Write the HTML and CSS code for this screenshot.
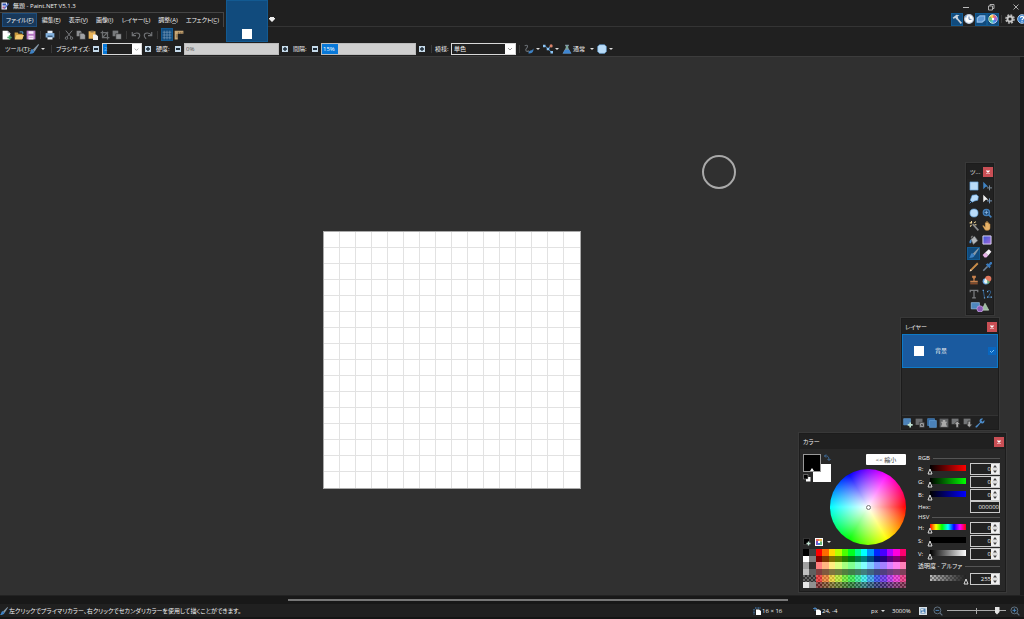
FILE: index.html
```html
<!DOCTYPE html>
<html lang="ja">
<head>
<meta charset="utf-8">
<title>無題 - Paint.NET V5.1.3</title>
<link rel="stylesheet" href="styles.css">
</head>
<body>
<svg class="sprite" aria-hidden="true">
  <defs>
    <linearGradient id="gViolet" x1="0" y1="0" x2="1" y2="1"><stop offset="0" stop-color="#3558d8"/><stop offset="1" stop-color="#a868d8"/></linearGradient>
    <symbol id="app" viewBox="0 0 16 16"><path fill="#e8ecf8" d="M1 1h11v14H1z"/><path fill="#3156b8" d="M3 3h7v4H3z"/><path fill="#b35a8b" d="M3 9h5v4H3z"/><path fill="#5c78cf" d="M14 2l2 2-7 9-3 1 1-3z"/></symbol>
    <symbol id="new" viewBox="0 0 16 16"><path fill="#fff" d="M1 1h8l4 4v10H1z"/><path fill="#aab" d="M9 1v4h4z"/><path stroke="#49a868" stroke-width="2.4" d="M12 8.500v7M8.500 12h7"/></symbol>
    <symbol id="open" viewBox="0 0 16 16"><path fill="#c99a3e" d="M1 4h5l1 2h7v8H1z"/><path fill="#f3c970" d="M4 8h12l-3 7H1z"/><path fill="none" stroke="#5aa0dc" stroke-width="1.600" d="M9 3h5v3"/></symbol>
    <symbol id="save" viewBox="0 0 16 16"><path fill="#b678c4" d="M1 1h14v14H1z"/><path fill="#f7eefa" d="M4 2h8v4H4zM4 9h8v6H4z"/><path fill="#b678c4" d="M5 11h6v1H5z"/></symbol>
    <symbol id="print" viewBox="0 0 16 16"><path fill="#e6edf5" d="M4 1h8v5H4zM4 11h8v4H4z"/><path fill="#83b2df" d="M1 5h14v7H1z"/><path fill="#35506c" d="M4 9h8v2H4z"/></symbol>
    <symbol id="cut" viewBox="0 0 16 16"><g fill="none" stroke="#77797c" stroke-width="1.600"><path d="M3 1l8 10M13 1L5 11"/><circle cx="4" cy="13" r="2"/><circle cx="12" cy="13" r="2"/></g></symbol>
    <symbol id="copy" viewBox="0 0 16 16"><path fill="#8b8d90" d="M1 1h6l2 2v7H1z"/><path fill="#a0a2a5" stroke="#212121" d="M6 5h6l3 3v7H6z"/></symbol>
    <symbol id="paste" viewBox="0 0 16 16"><path fill="#e9b45b" d="M1 2h11v12H1z"/><path fill="#8b734d" d="M4 1h5v3H4z"/><path fill="#f2f2f2" d="M8 7h5l3 3v6H8z"/></symbol>
    <symbol id="crop" viewBox="0 0 16 16"><path fill="none" stroke="#6c6e70" stroke-width="2" d="M4 1v11h11M1 4h11v11M5 11l8-8"/></symbol>
    <symbol id="desel" viewBox="0 0 16 16"><path fill="#77797b" d="M1 1h9v9H1z"/><path fill="#929496" stroke="#212121" d="M6 6h9v9H6z"/></symbol>
    <symbol id="undo" viewBox="0 0 16 16"><path fill="none" stroke="#717376" stroke-width="1.800" d="M2 3v6h6M2 9c4-6 12-5 12 0 0 2-1 3-3 5"/></symbol>
    <symbol id="redo" viewBox="0 0 16 16"><path fill="none" stroke="#717376" stroke-width="1.800" d="M14 3v6H8M14 9c-4-6-12-5-12 0 0 2 1 3 3 5"/></symbol>
    <symbol id="grid" viewBox="0 0 16 16"><path stroke="#7e9fbe" d="M3.500 1v14M8 1v14M12.500 1v14M1 3.500h14M1 8h14M1 12.500h14"/></symbol>
    <symbol id="ruler" viewBox="0 0 16 16"><path fill="#c9a876" d="M1 1h14v5H6v9H1z"/><path stroke="#5b4426" d="M7 3v3M10 3v3M13 3v3M3 8h3M3 11h3"/></symbol>
    <symbol id="brush" viewBox="0 0 16 16"><path fill="#8698a8" d="M15 0l1 1-7 11-3-3z"/><path fill="#3f82c4" d="M5 8l4 4c-1 3-5 4-9 4 3-2 2-7 5-8z"/></symbol>
    <symbol id="squig" viewBox="0 0 16 16"><path fill="none" stroke="#686d72" stroke-width="1.800" d="M1 3c5-3 6 1 3 4s0 6 4 4"/><path fill="#3f82c4" d="M7 15c1-5 4-5 6-5l2-3c1 6-3 8-8 8z"/></symbol>
    <symbol id="spline" viewBox="0 0 16 16"><path fill="none" stroke="#4b90d0" stroke-width="1.600" d="M2 3c4 0 4 5 7 6s2 4 5 4M8 9l4-6"/><path fill="#8cc4f3" d="M0 1h4v4H0zM6 6h4v4H6zM12 11h4v4h-4z"/><circle cx="13" cy="3" r="2.500" fill="#d98269"/></symbol>
    <symbol id="flask" viewBox="0 0 16 16"><path fill="#8299a6" d="M5 1h6v2h-1v3l5 9H1l5-9V3H5z"/><path fill="#3f86d2" d="M5 9h6l4 6H1z"/><path fill="#6fac8c" d="M7 3h2v5H7z"/></symbol>
    <symbol id="clipr" viewBox="0 0 16 16"><path fill="#b9dcf8" stroke="#538fc4" d="M4 1h8l3 3v8l-3 3H4l-3-3V4z"/></symbol>
    <symbol id="hammer" viewBox="0 0 16 16"><path stroke="#c7ced6" stroke-width="2.600" d="M7 6l8 9"/><path fill="#c7d3de" d="M1 6l6-5 5 1-3 2 1 3-2 2-3-3-2 2z"/></symbol>
    <symbol id="clock" viewBox="0 0 16 16"><circle cx="8" cy="8" r="7" fill="#fff" stroke="#bac8dc" stroke-width="2"/><path fill="none" stroke="#4a6ea0" stroke-width="1.400" d="M8 4v4.500h4"/><path fill="#7aa5d6" d="M0 4l4-3v5z"/></symbol>
    <symbol id="layersI" viewBox="0 0 16 16"><path fill="#8dbae8" d="M6 2h9v8l-5 4H1V6z"/><path fill="#5d97d4" d="M6 4h7v5l-4 3H3V7z"/></symbol>
    <symbol id="wheelI" viewBox="0 0 16 16"><path fill="#ee6f74" d="M8 8V1a7 7 0 0 1 6 4z"/><path fill="#b064df" d="M8 8l6-4v8z"/><path fill="#4b91ec" d="M8 8l6 4a7 7 0 0 1-6 3z"/><path fill="#55c5c0" d="M8 8v7a7 7 0 0 1-6-3z"/><path fill="#73ce6e" d="M8 8l-6 4V4z"/><path fill="#f3cf52" d="M8 8L2 4a7 7 0 0 1 6-3z"/><circle cx="8" cy="8" r="7" fill="none" stroke="#fff"/><circle cx="8" cy="8" r="2" fill="#fff"/></symbol>
    <symbol id="gear" viewBox="0 0 16 16"><circle cx="8" cy="8" r="6.500" fill="none" stroke="#b7b7b7" stroke-width="2.500" stroke-dasharray="3 2.100"/><circle cx="8" cy="8" r="4" fill="none" stroke="#c6c6c6" stroke-width="3"/></symbol>
    <symbol id="help" viewBox="0 0 16 16"><circle cx="8" cy="8" r="7" fill="#3a80cd" stroke="#b3cfed" stroke-width="1.500"/><path fill="none" stroke="#fff" stroke-width="1.800" d="M5.500 6c0-3 5-3 5 0 0 2-2.500 2-2.500 4M8 11.500v1.500"/></symbol>
    <symbol id="rectsel" viewBox="0 0 16 16"><path fill="#b9dcfa" stroke="#5e9fd8" d="M1.500 1.500h13v13h-13z"/></symbol>
    <symbol id="movepx" viewBox="0 0 16 16"><path fill="#3f83c4" d="M2 1l8 8H6l-4 4z"/><path stroke="#7d8c99" stroke-width="1.600" d="M12 7v8M8 11h8"/></symbol>
    <symbol id="movesel" viewBox="0 0 16 16"><path fill="#f2f2f2" d="M2 1l8 8H6l-4 4z"/><path stroke="#7799bb" stroke-width="1.600" d="M12 7v8M8 11h8"/></symbol>
    <symbol id="lasso" viewBox="0 0 16 16"><path fill="#b9dcfa" stroke="#5e9fd8" d="M5 2l7-1 3 3-1 6-5 1-4 2-3-3z"/><path fill="none" stroke="#4b8bc8" stroke-width="1.600" d="M5 11l-4 4"/></symbol>
    <symbol id="ellsel" viewBox="0 0 16 16"><circle cx="8" cy="8" r="6.500" fill="#b9dcfa" stroke="#5e9fd8"/></symbol>
    <symbol id="zoomT" viewBox="0 0 16 16"><circle cx="7" cy="7" r="5" fill="#204a77" stroke="#4380bb" stroke-width="2"/><path stroke="#4380bb" stroke-width="2.600" d="M10.500 10.500L15 15"/><path stroke="#8dbbe6" stroke-width="1.300" d="M7 4v6M4 7h6"/></symbol>
    <symbol id="wand" viewBox="0 0 16 16"><path stroke="#8a8c8e" stroke-width="2.600" d="M6 5l9 10"/><path stroke="#f1d799" stroke-width="1.700" d="M1 3h4M4 0v2M4 6l-2 3M8 3l3-2M9 6h3"/></symbol>
    <symbol id="hand" viewBox="0 0 16 16"><path fill="#e7b268" stroke="#89602c" stroke-width=".6" d="M5 8V3c0-1 2-1 2 0V1c0-1 2-1 2 0v2c0-1 2-1 2 0v2c0-1 2-1 2 0v6c0 5-8 5-9 2L1 8c0-2 2-1 4 2z"/></symbol>
    <symbol id="bucket" viewBox="0 0 16 16"><path fill="#b5b8bb" stroke="#606468" d="M3 7l6-5 5 7-7 6z"/><path fill="none" stroke="#999" stroke-width="1.300" d="M8 6C6 0 3 1 4 5"/><path fill="#478bd0" d="M3 7c-2 1-3 4-2 6 2 1 3-1 3-4z"/></symbol>
    <symbol id="gradT" viewBox="0 0 16 16"><path fill="url(#gViolet)" stroke="#ddd8f2" stroke-width="1.500" d="M1.500 1.500h13v13h-13z"/></symbol>
    <symbol id="eraser" viewBox="0 0 16 16"><path fill="#e9b3e8" d="M1 11l4-4 5 5-3 3H4z"/><path fill="#f7f1f8" d="M5 7l6-5 4 4-5 6z"/></symbol>
    <symbol id="pencil" viewBox="0 0 16 16"><path stroke="#d99a51" stroke-width="3" d="M3.500 12.500L14 2"/><path fill="#f1d6b2" d="M1 15l1-4 3 3z"/><path stroke="#7c5029" stroke-width=".8" d="M3 12L14 1"/></symbol>
    <symbol id="picker" viewBox="0 0 16 16"><path stroke="#708398" stroke-width="2.400" d="M2 14l7-7"/><path fill="#3a7abd" d="M6 4l3-2 2 1 2-3c3-1 4 2 3 3l-3 2 1 2-2 3z"/></symbol>
    <symbol id="stamp" viewBox="0 0 16 16"><path fill="#c7814d" d="M5 1h6v3l-2 2v3h5v3H2V9h5V6L5 4z"/><path fill="#90512d" d="M2 13h12v2H2z"/></symbol>
    <symbol id="recolor" viewBox="0 0 16 16"><circle cx="6" cy="10" r="5" fill="#66a8e7"/><circle cx="10" cy="6" r="5" fill="#de765c"/><path fill="#e9f5ef" d="M5 5l6 6-5 3-3-3z"/><path fill="#69ad7c" d="M8 8l5 3-4 4z"/></symbol>
    <symbol id="textT" viewBox="0 0 16 16"><path fill="none" stroke="#7b7d80" stroke-width="2" d="M2 5V2h12v3M8 2v12M5 14.200h6"/></symbol>
    <symbol id="line" viewBox="0 0 16 16"><path fill="none" stroke="#356da4" stroke-width="1.300" d="M2 2l2 12M9 3c8-2 5 4 0 10h6"/><path fill="#6aa8df" d="M1 1h2v2H1zM3 13h2v2H3zM8 3h2v2H8zM8 12h2v2H8zM14 12h2v2h-2z"/></symbol>
    <symbol id="shapes" viewBox="0 0 32 16"><path fill="#4e87be" stroke="#a1c8ee" d="M2 1h13v10H2z"/><path fill="#9abb9e" stroke="#c8dbc6" d="M24 2l6 11H19z"/><circle cx="16" cy="11" r="5" fill="#8b5ab4" stroke="#d0b2ec"/></symbol>
    <symbol id="laddd" viewBox="0 0 16 16"><path fill="#4c82b8" stroke="#609ad1" d="M1 1h11v10H1z"/><path stroke="#bfe1d0" stroke-width="2.600" d="M11.500 7v8M7.500 11h8"/></symbol>
    <symbol id="ldel" viewBox="0 0 16 16"><path fill="#6b6d6f" d="M1 1h11v10H1z"/><path fill="#a0a2a4" stroke="#262626" d="M7 7h8v8H7z"/><path stroke="#444" stroke-width="1.400" d="M9 9l4 4M13 9l-4 4"/></symbol>
    <symbol id="ldup" viewBox="0 0 16 16"><path fill="#3369a1" stroke="#4c8bc8" d="M1 1h11v11H1z"/><path fill="#4b82b9" stroke="#65a0d7" d="M4 4h11v11H4z"/></symbol>
    <symbol id="lmerge" viewBox="0 0 16 16"><path fill="#606264" d="M1 1h14v14H1z"/><path fill="#aaa" d="M6 3h4v3h3l-2 3 2 5H3l2-5-2-3h3z"/></symbol>
    <symbol id="lup" viewBox="0 0 16 16"><path fill="#737577" d="M1 1h11v9H1z"/><path fill="#aaa" stroke="#262626" d="M10 5l5 5h-3v5H8v-5H5z"/></symbol>
    <symbol id="ldown" viewBox="0 0 16 16"><path fill="#737577" d="M1 1h11v9H1z"/><path fill="#aaa" stroke="#262626" d="M10 15l5-5h-3V5H8v5H5z"/></symbol>
    <symbol id="wrench" viewBox="0 0 16 16"><path fill="#4c8bc8" d="M15 3l-3 3-2-2 3-3c-5-1-7 3-5 6l-7 6c-1 2 1 3 2 2l6-7c4 2 7-1 6-5z"/></symbol>
    <symbol id="swap" viewBox="0 0 16 16"><path fill="none" stroke="#3f6f9f" stroke-width="2" d="M6 1L3 4l3 3M3 4c7-1 9 2 9 8M9 10l3 3 3-3"/></symbol>
    <symbol id="bw" viewBox="0 0 16 16"><path fill="#fff" d="M6 6h9v9H6z"/><path fill="#000" stroke="#aaa" d="M1 1h9v9H1z"/></symbol>
    <symbol id="addc" viewBox="0 0 16 16"><path fill="#000" stroke="#555" d="M1 1h12v12H1z"/><path stroke="#bfe1d0" stroke-width="2.600" d="M11 7v8M7 11h8"/></symbol>
    <symbol id="pal" viewBox="0 0 16 16"><path fill="#fff" d="M0 0h16v16H0z"/><path fill="#e66d63" d="M2 2h6v4H2z"/><path fill="#eab64c" d="M8 2h6v5H8z"/><path fill="#7b55c8" d="M2 6h4v8H2z"/><path fill="#3986d6" d="M6 10h5v4H6z"/><path fill="#66b776" d="M10 7h4v7h-4z"/><path fill="#fff" d="M6 6h4v4H6z"/></symbol>
    <symbol id="size" viewBox="0 0 16 16"><path fill="#fff" d="M6 5h6l4 3v8H6z"/><path stroke="#4a8bca" stroke-width="2" stroke-dasharray="2 1" d="M4 2h11M2 4v12"/></symbol>
    <symbol id="pos" viewBox="0 0 16 16"><path fill="#fff" d="M6 5h6l4 3v8H6z"/><path stroke="#4a8bca" stroke-width="1.600" d="M0 3h8M4 0v8"/></symbol>
    <symbol id="fit" viewBox="0 0 16 16"><path fill="#d9e0e6" d="M0 0h16v16H0z"/><path fill="#4a80b5" d="M3 3h10v10H3z"/><path fill="#d9e0e6" d="M4 4h5v3H4zM4 12l4-4 4 4z"/></symbol>
    <symbol id="zout" viewBox="0 0 16 16"><circle cx="7" cy="7" r="5.500" fill="none" stroke="#60707f" stroke-width="1.600"/><path stroke="#60707f" stroke-width="2" d="M11 11l4 4"/><path stroke="#4b8bc8" stroke-width="1.500" d="M4 7h6"/></symbol>
    <symbol id="zin" viewBox="0 0 16 16"><circle cx="7" cy="7" r="5.500" fill="none" stroke="#60707f" stroke-width="1.600"/><path stroke="#60707f" stroke-width="2" d="M11 11l4 4"/><path stroke="#4b8bc8" stroke-width="1.500" d="M4 7h6M7 4v6"/></symbol>
    <symbol id="minus" viewBox="0 0 6 6"><path fill="#c5daea" d="M0 0h6v6H0z"/><path fill="#1d2b38" d="M1 2h4v2H1z"/></symbol>
    <symbol id="plus" viewBox="0 0 6 6"><path fill="#c5daea" d="M0 0h6v6H0z"/><path fill="#1d2b38" d="M1 2.300h4v1.400H1zM2.300 1h1.400v4H2.300z"/></symbol>
    <symbol id="min" viewBox="0 0 8 8"><path stroke="#bbb" d="M1 4.500h6"/></symbol>
    <symbol id="restore" viewBox="0 0 8 8"><path fill="none" stroke="#bbb" stroke-width=".9" d="M1.500 3h4v4h-4zM3 3V1.500h4v4H5.500"/></symbol>
    <symbol id="close" viewBox="0 0 8 8"><path stroke="#bbb" stroke-width=".9" d="M1.500 1.500l5 5M6.500 1.500l-5 5"/></symbol>
    <symbol id="x" viewBox="0 0 8 8"><path stroke="#fff" stroke-width="1.300" d="M2.500 2.500l3 3M5.500 2.500l-3 3"/></symbol>
    <symbol id="tabs" viewBox="0 0 8 8"><path fill="#eee" d="M2 2h4v1h1v1L4 7 1 4V3h1z"/></symbol>
  </defs>
</svg>

<div class="app">
  <header class="chrome">
    <div class="top">
      <div class="left">
        <div class="title"><svg class="i8"><use href="#app"/></svg><span>無題 - Paint.NET V5.1.3</span></div>
        <nav class="menu">
          <button class="on">ファイル(<u>F</u>)</button><button>編集(<u>E</u>)</button><button>表示(<u>V</u>)</button><button>画像(<u>I</u>)</button><button>レイヤー(<u>L</u>)</button><button>調整(<u>A</u>)</button><button>エフェクト(<u>C</u>)</button>
        </nav>
        <div class="tools">
          <button class="cell" aria-label="新規"><svg><use href="#new"/></svg></button>
          <button class="cell" aria-label="開く"><svg><use href="#open"/></svg></button>
          <button class="cell" aria-label="保存"><svg><use href="#save"/></svg></button>
          <i class="sep"></i>
          <button class="cell" aria-label="印刷"><svg><use href="#print"/></svg></button>
          <i class="sep"></i>
          <button class="cell" aria-label="切り取り"><svg><use href="#cut"/></svg></button>
          <button class="cell" aria-label="コピー"><svg><use href="#copy"/></svg></button>
          <button class="cell" aria-label="貼り付け"><svg><use href="#paste"/></svg></button>
          <button class="cell" aria-label="トリミング"><svg><use href="#crop"/></svg></button>
          <button class="cell" aria-label="選択解除"><svg><use href="#desel"/></svg></button>
          <i class="sep"></i>
          <button class="cell" aria-label="元に戻す"><svg><use href="#undo"/></svg></button>
          <button class="cell" aria-label="やり直し"><svg><use href="#redo"/></svg></button>
          <i class="sep"></i>
          <button class="cell on" aria-label="グリッド"><svg><use href="#grid"/></svg></button>
          <button class="cell" aria-label="ルーラー"><svg><use href="#ruler"/></svg></button>
        </div>
      </div>
      <button class="tab" aria-label="無題"><span class="thumb"></span></button>
      <div class="right">
        <div class="winbtns">
          <button aria-label="最小化"><svg class="i8"><use href="#min"/></svg></button>
          <button aria-label="元に戻す"><svg class="i8"><use href="#restore"/></svg></button>
          <button aria-label="閉じる"><svg class="i8"><use href="#close"/></svg></button>
        </div>
        <div class="utils">
          <button class="tablist" aria-label="一覧"><svg class="i8"><use href="#tabs"/></svg></button>
          <button class="cell on" aria-label="ツール"><svg><use href="#hammer"/></svg></button>
          <button class="cell" aria-label="履歴"><svg><use href="#clock"/></svg></button>
          <button class="cell on" aria-label="レイヤー"><svg><use href="#layersI"/></svg></button>
          <button class="cell on" aria-label="カラー"><svg><use href="#wheelI"/></svg></button>
          <i class="sep narrow"></i>
          <button class="cell" aria-label="設定"><svg><use href="#gear"/></svg></button>
          <button class="cell" aria-label="ヘルプ"><svg><use href="#help"/></svg></button>
        </div>
      </div>
    </div>
    <div class="options">
      <span class="lab tool">ツール(<u>T</u>):</span>
      <button class="cell" aria-label="ブラシ"><svg><use href="#brush"/></svg></button><i class="caret"></i><i class="sep wide"></i>
      <label class="lab size" for="bsize">ブラシサイズ:</label>
      <button class="step" aria-label="小さく"><svg><use href="#minus"/></svg></button>
      <span class="combo"><input id="bsize" type="text" value="2"><button class="drop" aria-label="サイズ一覧"></button></span>
      <button class="step" aria-label="大きく"><svg><use href="#plus"/></svg></button>
      <label class="lab short" for="hard">硬度:</label>
      <button class="step" aria-label="硬度を下げる"><svg><use href="#minus"/></svg></button>
      <input class="pct" id="hard" type="text" value="0%">
      <button class="step" aria-label="硬度を上げる"><svg><use href="#plus"/></svg></button>
      <label class="lab short" for="space">間隔:</label>
      <button class="step" aria-label="間隔を下げる"><svg><use href="#minus"/></svg></button>
      <input class="pct filled" id="space" type="text" value="15%">
      <button class="step" aria-label="間隔を上げる"><svg><use href="#plus"/></svg></button>
      <i class="sep"></i>
      <label class="lab short" for="fill">模様:</label>
      <select id="fill" class="fill"><option>単色</option></select>
      <i class="sep"></i>
      <button class="cell" aria-label="アンチエイリアス"><svg><use href="#squig"/></svg></button><i class="caret"></i>
      <button class="cell" aria-label="曲線"><svg><use href="#spline"/></svg></button><i class="caret"></i>
      <button class="cell blend"><svg><use href="#flask"/></svg>通常</button><i class="caret"></i>
      <button class="cell" aria-label="選択範囲"><svg><use href="#clipr"/></svg></button><i class="caret"></i>
    </div>
  </header>

  <main class="work">
    <div class="paper"></div>
    <div class="cursor"></div>

    <section class="win wtools">
      <h2>ツ...<button class="x" aria-label="閉じる"><svg><use href="#x"/></svg></button></h2>
      <div class="toolgrid">
        <button aria-label="四角形選択"><svg><use href="#rectsel"/></svg></button><button aria-label="ピクセル移動"><svg><use href="#movepx"/></svg></button>
        <button aria-label="投げなわ"><svg><use href="#lasso"/></svg></button><button aria-label="選択範囲移動"><svg><use href="#movesel"/></svg></button>
        <button aria-label="楕円選択"><svg><use href="#ellsel"/></svg></button><button aria-label="ズーム"><svg><use href="#zoomT"/></svg></button>
        <button aria-label="魔法の杖"><svg><use href="#wand"/></svg></button><button aria-label="パン"><svg><use href="#hand"/></svg></button>
        <button aria-label="塗りつぶし"><svg><use href="#bucket"/></svg></button><button aria-label="グラデーション"><svg><use href="#gradT"/></svg></button>
        <button class="on" aria-label="ブラシ"><svg><use href="#brush"/></svg></button><button aria-label="消しゴム"><svg><use href="#eraser"/></svg></button>
        <button aria-label="鉛筆"><svg><use href="#pencil"/></svg></button><button aria-label="スポイト"><svg><use href="#picker"/></svg></button>
        <button aria-label="スタンプ"><svg><use href="#stamp"/></svg></button><button aria-label="色の変更"><svg><use href="#recolor"/></svg></button>
        <button aria-label="テキスト"><svg><use href="#textT"/></svg></button><button aria-label="線"><svg><use href="#line"/></svg></button>
        <button class="both" aria-label="図形"><svg><use href="#shapes"/></svg></button>
      </div>
    </section>

    <section class="win wlayers">
      <h2>レイヤー<button class="x" aria-label="閉じる"><svg><use href="#x"/></svg></button></h2>
      <div class="layer"><span class="thumb"></span><label for="bg">背景</label><input id="bg" type="checkbox" checked></div>
      <div class="lbtns">
        <button class="cell" aria-label="追加"><svg><use href="#laddd"/></svg></button>
        <button class="cell" aria-label="削除"><svg><use href="#ldel"/></svg></button>
        <button class="cell" aria-label="複製"><svg><use href="#ldup"/></svg></button>
        <button class="cell" aria-label="結合"><svg><use href="#lmerge"/></svg></button>
        <button class="cell" aria-label="上へ"><svg><use href="#lup"/></svg></button>
        <button class="cell" aria-label="下へ"><svg><use href="#ldown"/></svg></button>
        <button class="cell" aria-label="プロパティ"><svg><use href="#wrench"/></svg></button>
      </div>
    </section>

    <section class="win wcolors">
      <h2>カラー<button class="x" aria-label="閉じる"><svg><use href="#x"/></svg></button></h2>
      <div class="cbody">
        <div class="pick">
          <div class="side">
            <div class="chips"><span class="sec"></span><span class="pri"></span><svg class="swap"><use href="#swap"/></svg><svg class="bw"><use href="#bw"/></svg></div>
            <div class="palbtns"><button aria-label="色を追加"><svg class="i8"><use href="#addc"/></svg></button><button aria-label="パレット"><svg class="i8"><use href="#pal"/></svg></button><i class="caret"></i></div>
          </div>
          <div class="wheelcol">
            <button class="less">&lt;&lt; 縮小</button>
            <div class="wheel"><i></i></div>
          </div>
          <div class="palette">
            <div class="greys"><i class="g1"></i><i class="g2"></i><i class="g3"></i><i class="g4"></i><i class="g5"></i><i class="g6"></i></div>
            <div class="hues"><i></i><i class="dark"></i><i class="light"></i><i class="mute"></i><i class="half"></i><i class="halfdark"></i></div>
          </div>
        </div>
        <div class="vals">
          <h3>RGB</h3>
          <div class="row"><label for="r">R:</label><input class="rng red" type="range" min="0" max="255" value="0" aria-label="R"><span class="spin"><input id="r" type="text" value="0"><i></i></span></div>
          <div class="row"><label for="g">G:</label><input class="rng green" type="range" min="0" max="255" value="0" aria-label="G"><span class="spin"><input id="g" type="text" value="0"><i></i></span></div>
          <div class="row"><label for="b">B:</label><input class="rng blue" type="range" min="0" max="255" value="0" aria-label="B"><span class="spin"><input id="b" type="text" value="0"><i></i></span></div>
          <div class="row hex"><label for="hex">Hex:</label><span class="spin"><input id="hex" type="text" value="000000"></span></div>
          <h3>HSV</h3>
          <div class="row"><label for="h">H:</label><input class="rng hue" type="range" min="0" max="360" value="0" aria-label="H"><span class="spin"><input id="h" type="text" value="0"><i></i></span></div>
          <div class="row"><label for="s">S:</label><input class="rng sat" type="range" value="0" aria-label="S"><span class="spin"><input id="s" type="text" value="0"><i></i></span></div>
          <div class="row"><label for="v">V:</label><input class="rng val" type="range" value="0" aria-label="V"><span class="spin"><input id="v" type="text" value="0"><i></i></span></div>
          <h3 class="op">透明度 - アルファ</h3>
          <div class="row"><label for="a"></label><input class="rng alpha" type="range" min="0" max="255" value="255" aria-label="アルファ"><span class="spin"><input id="a" type="text" value="255"><i></i></span></div>
        </div>
      </div>
    </section>
  </main>
  <div class="hscroll"><i></i></div>

  <footer class="status">
    <svg class="i8"><use href="#brush"/></svg><span class="msg">左クリックでプライマリカラー、右クリックでセカンダリカラーを使用して描くことができます。</span>
    <span class="dim"><svg class="i8"><use href="#size"/></svg>16 × 16</span>
    <span class="at"><svg class="i8"><use href="#pos"/></svg>24, -4</span>
    <span class="unit">px<i class="caret"></i></span>
    <span class="pc">3000%</span>
    <button aria-label="全体表示"><svg class="i8"><use href="#fit"/></svg></button>
    <button class="zo" aria-label="縮小"><svg><use href="#zout"/></svg></button>
    <input class="zoom" type="range" value="88" aria-label="ズーム">
    <button class="zi" aria-label="拡大"><svg><use href="#zin"/></svg></button>
  </footer>
</div>
</body>
</html>
```

FILE: styles.css
```css
* { box-sizing: border-box; }
body {
  margin: 0;
  background: #202020;
  color: #f2f2f2;
  font: 6px/10px "Open Sans", "Noto Sans CJK JP", sans-serif;
  font-feature-settings: "palt";
  overflow: hidden;
}
button, input, select { font: inherit; font-feature-settings: inherit; color: inherit; margin: 0; padding: 0; border: 0; border-radius: 0; background: none; outline: 0; }
button { display: flex; align-items: center; justify-content: center; white-space: nowrap; }
h2, h3 { margin: 0; font: inherit; }
svg { display: block; width: 10px; height: 10px; flex: none; }
.sprite { position: absolute; width: 0; height: 0; }
.i8 { width: 8px; height: 8px; }
u { text-underline-offset: 1px; text-decoration-thickness: 1px; text-decoration-color: #888; }

.app { display: flex; flex-direction: column; height: 100vh; }
.chrome { flex: none; border-bottom: 1px solid #3c3c3c; }
.top { display: flex; height: 42px; }
.left { width: 226px; display: flex; flex-direction: column; }
.title { display: flex; align-items: center; gap: 4px; height: 12px; padding-left: 1px; }
.menu { display: flex; width: 224px; height: 15px; border: 1px solid #454545; border-width: 1px 1px 0 0; padding: 0 0 0 2px; justify-content: space-between; }
.menu button { padding: 0 4px; }
.menu .on { background: #18385a; box-shadow: inset 0 0 0 1px #1d4d7c; }
.tools { display: flex; height: 15px; align-items: center; padding-left: 1px; }
.cell { width: 12px; height: 13px; flex: none; }
.cell.on { background: #114b7d; box-shadow: inset 0 0 0 1px #125a92; }
.sep { width: 1px; height: 8px; margin: 0 3px; background: #393939; flex: none; }
.sep.narrow { margin: 0 2px; }
.sep.wide { margin: 0 4px; }
.tab { width: 42px; flex: none; align-items: flex-end; padding-bottom: 3px; background: #114b7d; box-shadow: inset 0 0 0 1px #125a92; }
.thumb { display: block; width: 10px; height: 10px; background: #fff; }
.right { flex: 1; display: flex; flex-direction: column; }
.winbtns { display: flex; height: 13px; justify-content: flex-end; align-items: center; gap: 17px; padding-right: 4px; }
.utils { display: flex; height: 14px; align-items: center; border-bottom: 1px solid #343434; padding-bottom: 1px; margin-right: -4px; }
.tablist { margin-right: auto; width: 8px; }

.options { display: flex; height: 14px; align-items: center; white-space: nowrap; padding-left: 5px; }
.lab.tool { width: 23px; }
.lab.size { width: 34px; }
.lab.short { width: 16px; }
.caret { width: 0; height: 0; border: 2px solid transparent; border-top-color: #ddd; border-bottom: 0; margin: 0 2px; flex: none; }
.step { width: 12px; height: 12px; flex: none; }
.step svg { width: 6px; height: 6px; }
.combo { display: flex; width: 40px; height: 12px; border: 1px solid #d8d8d8; }
.combo input { width: 29px; padding: 0 1px; background: linear-gradient(#0878d8, #0878d8) 0 0 / 4px 100% no-repeat; color: #6db9ff; }
.drop { flex: 1; background: #fff url("data:image/svg+xml,%3Csvg xmlns='http://www.w3.org/2000/svg' viewBox='0 0 8 8'%3E%3Cpath fill='none' stroke='%23999' d='M2 3l2 2 2-2'/%3E%3C/svg%3E") center / 7px no-repeat; }
.combo + .step + .lab, .pct + .step + .lab { margin-left: 2px; }
.pct { width: 95px; height: 12px; padding: 0 1px; background: #cfcfcf; color: #555; border: 1px solid #bcbcbc; }
.pct.filled { background: linear-gradient(90deg, #0878d8 16px, #cfcfcf 16px); color: #fff; }
.fill { width: 65px; height: 12px; appearance: none; border: 1px solid #d8d8d8; padding: 0 0 0 2px; line-height: 10px; background: #202020 url("data:image/svg+xml,%3Csvg xmlns='http://www.w3.org/2000/svg' viewBox='0 0 10 10'%3E%3Cpath fill='%23fff' d='M0 0h10v10H0z'/%3E%3Cpath fill='none' stroke='%23999' d='M3 4l2 2 2-2'/%3E%3C/svg%3E") right / 10px no-repeat; }
.options .caret { margin: 0 2px 0 1px; }
.blend { width: auto; gap: 1px; margin: 0 4px 0 1px; }

.work { position: relative; flex: 1; background: #303030; border-right: 4px solid #1b1b1b; }
.paper { position: absolute; left: 323px; top: 174px; width: 258px; height: 258px; border: 1px solid #aaa; background: repeating-linear-gradient(90deg, transparent 0 15px, #e2e2e2 15px 16px) 0 0 / 255px 100% no-repeat, repeating-linear-gradient(transparent 0 15px, #e2e2e2 15px 16px) 0 0 / 100% 255px no-repeat, #fff; }
.cursor { position: absolute; left: 702px; top: 98px; width: 34px; height: 34px; border: 2px solid #a9a9a9; border-radius: 50%; }

.win { position: absolute; background: #282828; border: 1px solid #1c1c1c; box-shadow: 0 0 0 1px #383838; display: flex; flex-direction: column; }
.win h2 { display: flex; align-items: center; justify-content: space-between; height: 15px; padding: 0 1px 0 3px; background: #202020; flex: none; }
.x { width: 10px; height: 10px; background: #c94f55; }
.x svg { width: 8px; height: 8px; }
.wtools { left: 966px; top: 106px; width: 28px; }
.wtools h2 { padding-right: 0; }
.toolgrid { display: grid; grid-template-columns: 13px 13px; grid-template-rows: repeat(10, 1fr); height: 135px; background: #222; }
.toolgrid .on { background: #114b7d; box-shadow: inset 0 0 0 1px #125a92; }
.both { grid-column: span 2; }
.toolgrid .both svg { width: 20px; height: 10px; }
.wlayers { left: 901px; top: 261px; width: 98px; height: 112px; }
.layer { display: flex; align-items: center; height: 34px; padding: 0 1px 0 11px; background: #1a5a9f; border: 1px solid #0e7ac7; flex: none; }
.layer label { margin-left: 11px; flex: 1; }
.layer input { width: 8px; height: 8px; appearance: none; background: #0967c0 url("data:image/svg+xml,%3Csvg xmlns='http://www.w3.org/2000/svg' viewBox='0 0 8 8'%3E%3Cpath fill='none' stroke='%2373bdf5' d='M2 4l1.500 1.500L6 3'/%3E%3C/svg%3E"); }
.lbtns { display: flex; margin-top: auto; height: 14px; background: #212121; border-top: 1px solid #333; }

.wcolors { left: 799px; top: 376px; width: 207px; height: 159px; }
.cbody { display: flex; padding: 5px 5px 0 3px; }
.pick { width: 103px; display: grid; grid-template-columns: 26px 1fr; grid-template-rows: 92px auto; row-gap: 3px; flex: none; }
.side { display: flex; flex-direction: column; justify-content: space-between; }
.chips { position: relative; width: 28px; height: 28px; }
.chips > * { position: absolute; }
.pri { left: 0; top: 0; width: 18px; height: 18px; background: #000; border: 1px solid #999; }
.pri::after { content: ""; position: absolute; left: 6px; bottom: 0; border: 2px solid transparent; border-bottom: 3px solid #fff; border-top: 0; }
.sec { left: 10px; top: 10px; width: 18px; height: 18px; background: #fff; }
.swap { left: 20px; top: 0; width: 8px; height: 8px; }
.bw { left: 0; top: 20px; width: 8px; height: 8px; }
.palbtns { display: flex; align-items: center; gap: 4px; width: 28px; }
.palbtns .caret { margin: 0; }
.wheelcol { display: flex; flex-direction: column; align-items: flex-end; gap: 4px; }
.less { width: 40px; height: 11px; background: #fff; color: #333; border-radius: 1px; }
.wheel { width: 76px; height: 76px; border-radius: 50%; display: grid; place-items: center; background: radial-gradient(circle closest-side, #fff, rgba(255,255,255,0)), conic-gradient(from 90deg, #f00, #ff0, #0f0, #0ff, #00f, #f0f, #f00); }
.wheel i { width: 5px; height: 5px; border: 1px solid #777; border-radius: 50%; background: #fff; }
.palette { grid-column: span 2; display: flex; height: 39px; }
.greys { width: 13px; display: grid; grid-template-rows: repeat(6, 1fr); }
.g1 { background: linear-gradient(90deg, #000 50%, #404040 50%); }
.g2 { background: linear-gradient(90deg, #fff 50%, #808080 50%); }
.g3 { background: linear-gradient(90deg, #a0a0a0 50%, #303030 50%); }
.g4 { background: linear-gradient(90deg, #c0c0c0 50%, #606060 50%); }
.g5 { background: repeating-conic-gradient(#333 0 25%, #666 0 50%) 0 0 / 4px 4px; }
.g6 { background: linear-gradient(90deg, #e8e8e8 50%, #919191 50%); }
.hues { flex: 1; display: grid; grid-template-rows: repeat(6, 1fr); background: linear-gradient(90deg, #f00 0 7.140%, #ff6a00 0 14.290%, #ffd800 0 21.430%, #b6ff00 0 28.570%, #4cff00 0 35.710%, #00ff21 0 42.860%, #00ff90 0 50%, #0ff 0 57.140%, #0094ff 0 64.290%, #0026ff 0 71.430%, #4800ff 0 78.570%, #b200ff 0 85.710%, #ff00dc 0 92.860%, #ff006e 0); }
.dark { background: rgba(0, 0, 0, .5); }
.light { background: rgba(255, 255, 255, .5); }
.mute { background: rgba(84, 84, 84, .75); }
.half { background: repeating-conic-gradient(rgba(130,130,130,.4) 0 25%, rgba(210,210,210,.4) 0 50%) 0 0 / 4px 4px; }
.halfdark { background: repeating-conic-gradient(rgba(50,50,50,.75) 0 25%, rgba(115,115,115,.75) 0 50%) 0 0 / 4px 4px; }

.vals { flex: 1; margin-left: 12px; }
.vals h3 { display: flex; align-items: center; gap: 3px; height: 8px; }
.vals h3::after { content: ""; flex: 1; height: 1px; background: #555; }
.vals .op { height: 12px; }
.row { display: flex; align-items: center; height: 13px; }
.row.hex { justify-content: space-between; height: 12px; }
.row label { width: 8px; }
.row.hex label { width: auto; }
.rng { appearance: none; width: 44px; height: 13px; background-position: 4px 3px; background-size: 36px 6px; background-repeat: no-repeat; }
.rng::-webkit-slider-thumb { appearance: none; width: 8px; height: 13px; background: url("data:image/svg+xml,%3Csvg xmlns='http://www.w3.org/2000/svg' viewBox='0 0 8 13'%3E%3Cpath fill='%23222' stroke='%23ddd' d='M4 7L2 12h4z'/%3E%3C/svg%3E"); }
.red { background-image: linear-gradient(90deg, #000, #f00); }
.green { background-image: linear-gradient(90deg, #000, #0f0); }
.blue { background-image: linear-gradient(90deg, #000, #00f); }
.hue { background-image: linear-gradient(90deg, #f00, #ff0, #0f0, #0ff, #00f, #f0f, #f00); }
.sat { background-image: linear-gradient(#000, #000); }
.val { background-image: linear-gradient(90deg, #000, #fff); }
.alpha { background-image: linear-gradient(90deg, transparent, #222), url("data:image/svg+xml,%3Csvg xmlns='http://www.w3.org/2000/svg' width='36' height='6'%3E%3Cpattern id='p' width='4' height='4' patternUnits='userSpaceOnUse'%3E%3Cpath fill='%23777' d='M0 0h4v4H0z'/%3E%3Cpath fill='%23bbb' d='M0 0h2v2H0zM2 2h2v2H2z'/%3E%3C/pattern%3E%3Cpath fill='url(%23p)' d='M0 0h36v6H0z'/%3E%3C/svg%3E"); }
.spin { display: flex; width: 30px; height: 12px; border: 1px solid #c9c9c9; margin-left: auto; }
.spin input { flex: 1; min-width: 0; text-align: right; background: #222; }
.spin i { width: 8px; background: #f0f0f0 url("data:image/svg+xml,%3Csvg xmlns='http://www.w3.org/2000/svg' viewBox='0 0 8 10'%3E%3Cpath fill='%23444' d='M4 1l2 2.500H2zM4 9l2-2.500H2z'/%3E%3Cpath stroke='%23aaa' stroke-width='.5' d='M1 5h6'/%3E%3C/svg%3E"); }

.hscroll { flex: none; height: 9px; padding: 3px 236px 0 288px; background: #181818; border-top: 1px solid #222; }
.hscroll i { display: block; height: 2px; background: #777; }
.status { display: flex; align-items: center; flex: none; height: 15px; border-bottom: 2px solid #151515; white-space: nowrap; }
.msg { flex: 1; margin-left: 1px; }
.status > span:not(.msg) { display: flex; align-items: center; gap: 1px; flex: none; }
.dim { width: 60px; }
.at { width: 58px; }
.status .unit { width: 21px; gap: 4px; }
.status .pc { width: 27px; }
.zo { margin-left: 6px; }
.zoom { appearance: none; width: 59px; height: 10px; margin: 0 4px; background: linear-gradient(#aaa, #aaa) center / 1px 6px no-repeat, linear-gradient(#aaa, #aaa) center / 100% 1px no-repeat; }
.zoom::-webkit-slider-thumb { appearance: none; width: 5px; height: 8px; background: #e4e4e4; clip-path: polygon(0 0, 100% 0, 100% 70%, 50% 100%, 0 70%); }
.zi { margin-right: 4px; }
```
